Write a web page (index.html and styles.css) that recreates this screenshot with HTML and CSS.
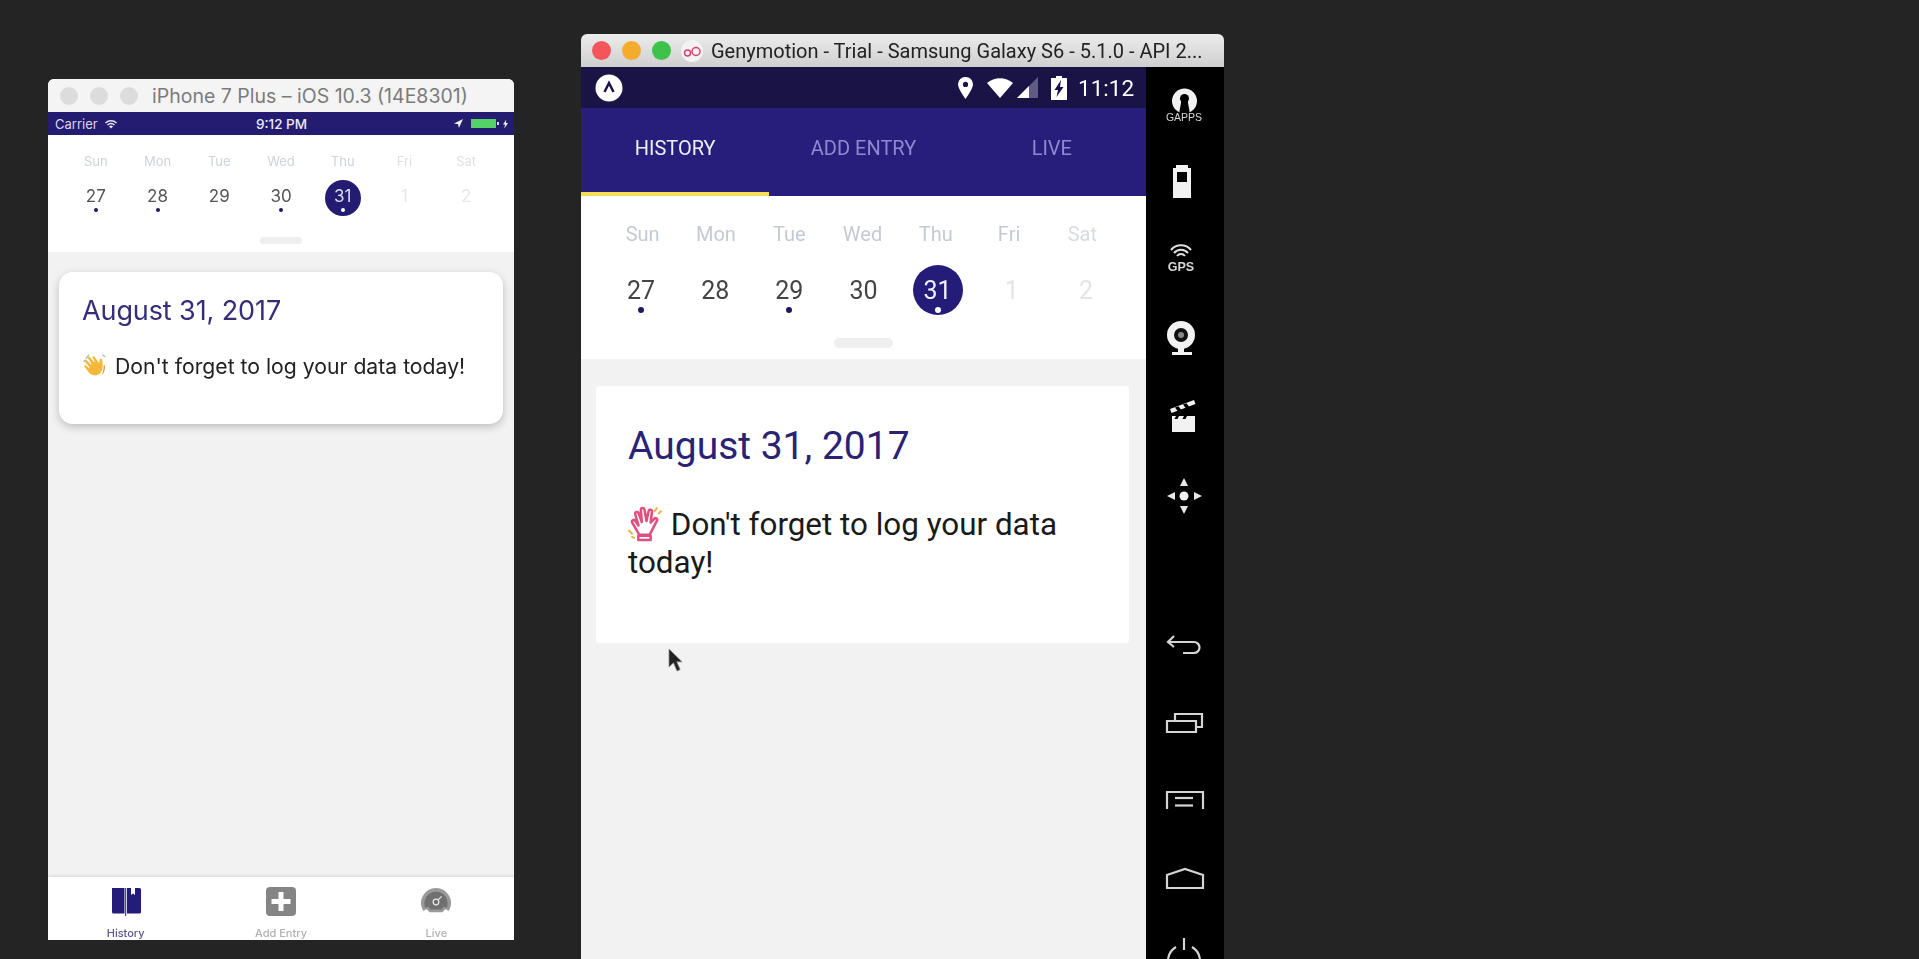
FILE: index.html
```html
<!DOCTYPE html>
<html lang="en">
<head>
<meta charset="utf-8">
<title>Simulators</title>
<link rel="stylesheet" href="styles.css">
</head>
<body>
<section class="ios">
  <header class="ios-title">
    <span class="ios-light"></span><span class="ios-light"></span><span class="ios-light"></span>
    <span class="ios-title-text">iPhone 7 Plus – iOS 10.3 (14E8301)</span>
  </header>
  <div class="ios-status">
    <span class="ios-carrier">Carrier
      <svg class="ios-wifi" viewBox="0 0 14 10"><path d="M1 3.500a8.500 8.500 0 0 1 12 0l-1 1a7 7 0 0 0-10 0zM3 5.500a5.700 5.700 0 0 1 8 0l-1 1a4.200 4.200 0 0 0-6 0zM5 7.500a2.800 2.800 0 0 1 4 0L7 9.600z"/></svg>
    </span>
    <span class="ios-time">9:12 PM</span>
    <span class="ios-right">
      <svg class="ios-arrow" viewBox="0 0 10 10"><path d="M10 0 0 5l4.500.8L5.500 10z"/></svg>
      <span class="ios-battery"></span><span class="ios-battery-tip"></span>
      <svg class="ios-bolt" viewBox="0 0 6 11"><path d="M4 0 0 6h2.400L1.600 11 6 4.400H3.400z"/></svg>
    </span>
  </div>
  <div class="ios-calendar">
    <div class="ios-week">
      <span class="ios-label">Sun</span><span class="ios-label">Mon</span><span class="ios-label">Tue</span><span class="ios-label">Wed</span><span class="ios-label">Thu</span><span class="ios-label is-faint">Fri</span><span class="ios-label is-faint">Sat</span>
    </div>
    <div class="ios-week ios-dates">
      <span class="ios-date has-dot">27</span><span class="ios-date has-dot">28</span><span class="ios-date">29</span><span class="ios-date has-dot">30</span><span class="ios-date is-selected has-dot">31</span><span class="ios-date is-disabled">1</span><span class="ios-date is-disabled">2</span>
    </div>
    <div class="ios-handle"></div>
  </div>
  <div class="ios-body">
    <article class="ios-card">
      <h2 class="ios-card-title">August 31, 2017</h2>
      <p class="ios-card-text">
        <svg class="ios-hand" viewBox="0 0 25 25"><path fill="#b9bcc4" d="M3 6 6 2l1 1-3 4zM1 9l1.500-2 1 .8-1.600 2zM19 2l3 2-.6 1-3-2z"/><path fill="#f4b93c" d="M8 21 2.500 14c-1-1.300.5-2.500 1.600-1.400l2.200 2.200.7-.7-4.300-5C1.700 7.700 3.300 6.500 4.300 7.500l4 4.200.6-.6-3.300-5c-.8-1.300 1-2.300 1.900-1.200l3.700 4.800.6-.5-2-3.600c-.7-1.300 1-2.200 1.800-1.100l4.300 6 .3-3c.3-1.700 2.500-1.600 2.600 0 .3 3.700.7 6.600-.3 9.500-1.500 4.600-7 6.300-10.500 3.200z"/><path fill="#e59a23" d="M21 12c.8 3.500-.2 7-2.500 9.500 1-3 1.700-6 1.500-9z"/></svg>
        Don't forget to log your data today!
      </p>
    </article>
  </div>
  <nav class="ios-tabs">
    <div class="ios-tab is-active">
      <svg class="ios-tab-icon" viewBox="0 0 30 30"><path fill="#231c78" d="M1 1h12.500v25.500H2.500A1.500 1.500 0 0 1 1 25zM16 1h4v7l2-1.600L24 8V1h4.500A1.500 1.500 0 0 1 30 2.500V25a1.500 1.500 0 0 1-1.500 1.500H16z"/><path fill="#231c78" d="M14.200 1h1v28h-1z"/></svg>
      <span class="ios-tab-label">History</span>
    </div>
    <div class="ios-tab">
      <svg class="ios-tab-icon" viewBox="0 0 30 30"><rect width="30" height="29" rx="4" fill="#858585"/><path fill="#fff" d="M12.500 5h5v7h7v5h-7v7h-5v-7h-7v-5h7z"/></svg>
      <span class="ios-tab-label">Add Entry</span>
    </div>
    <div class="ios-tab">
      <svg class="ios-tab-icon" viewBox="0 0 32 30"><path fill="#9a9a9a" d="M16 0a16 16 0 0 1 13.500 24.500L26 22.500 23 26H9l-3-3.500-3.500 2A16 16 0 0 1 16 0z"/><path fill="#707070" d="M16 4a12.500 12.500 0 0 1 11.500 17L24 20l-2 3H10l-2-3-3.500 1A12.500 12.500 0 0 1 16 4z"/><circle cx="16" cy="15" r="3" fill="none" stroke="#e8e8e8" stroke-width="1.300"/><path stroke="#e8e8e8" stroke-width="1.300" d="m18 13 4-4"/></svg>
      <span class="ios-tab-label">Live</span>
    </div>
  </nav>
</section>

<section class="android">
  <header class="geny-title">
    <span class="geny-light is-red"></span><span class="geny-light is-orange"></span><span class="geny-light is-green"></span>
    <svg class="geny-logo" viewBox="0 0 22 22"><circle cx="11" cy="11" r="11" fill="#f5f2f3"/><circle cx="6.500" cy="13" r="3" fill="none" stroke="#d8406c" stroke-width="1.500"/><circle cx="15" cy="11.500" r="4" fill="none" stroke="#d8406c" stroke-width="1.500"/></svg>
    <span class="geny-title-text">Genymotion - Trial - Samsung Galaxy S6 - 5.1.0 - API 2...</span>
  </header>
  <div class="geny-main">
    <div class="droid">
      <div class="droid-status">
        <svg class="droid-logo" viewBox="0 0 28 28"><circle cx="14" cy="14" r="13.500" fill="#fff"/><path fill="none" stroke="#1a1446" stroke-width="2.500" d="m9.500 18 4.500-9 4.500 9"/></svg>
        <svg class="droid-pin" viewBox="0 0 15 22"><path fill="#fff" fill-rule="evenodd" d="M7.500 0A7.300 7.300 0 0 1 15 7.300C15 12 7.500 22 7.500 22S0 12 0 7.300A7.300 7.300 0 0 1 7.500 0zm0 4.800a2.600 2.600 0 1 0 0 5.200 2.600 2.600 0 0 0 0-5.200z"/></svg>
        <svg class="droid-wifi" viewBox="0 0 26 20"><path fill="#fff" d="M13 20 0 5a20 20 0 0 1 26 0z"/></svg>
        <svg class="droid-signal" viewBox="0 0 21 21"><path fill="#5f5a86" d="M21 0v21H0z"/><path fill="#fff" d="M12 9v12H0z"/></svg>
        <svg class="droid-battery" viewBox="0 0 16 24"><path fill="#fff" d="M5 0h6v2h5v22H0V2h5z"/><path fill="#1a1446" d="M10 4 3.500 14H7l-1.500 7L12.500 11H9z"/></svg>
        <span class="droid-time">11:12</span>
      </div>
      <nav class="droid-tabs">
        <span class="droid-tab is-active">HISTORY</span>
        <span class="droid-tab">ADD ENTRY</span>
        <span class="droid-tab">LIVE</span>
      </nav>
      <div class="droid-calendar">
        <div class="droid-week droid-labels">
          <span class="droid-label">Sun</span><span class="droid-label">Mon</span><span class="droid-label">Tue</span><span class="droid-label">Wed</span><span class="droid-label">Thu</span><span class="droid-label">Fri</span><span class="droid-label is-faint">Sat</span>
        </div>
        <div class="droid-week droid-dates">
          <span class="droid-date has-dot">27</span><span class="droid-date">28</span><span class="droid-date has-dot">29</span><span class="droid-date">30</span><span class="droid-date is-selected has-dot">31</span><span class="droid-date is-disabled">1</span><span class="droid-date is-disabled">2</span>
        </div>
        <div class="droid-handle"></div>
      </div>
      <div class="droid-body">
        <article class="droid-card">
          <h2 class="droid-card-title">August 31, 2017</h2>
          <p class="droid-card-text">
            <svg class="droid-hand" viewBox="0 0 34 36"><g fill="none" stroke="#e0507f" stroke-width="2.500" stroke-linejoin="round" stroke-linecap="round"><path d="M11 29 4 17c-1-2 2-3.500 3.200-1.500l3 4.500L7 9c-.6-2.300 2.600-3 3.400-1l3 8.500L12.500 5c-.2-2.500 3-2.700 3.500-.5l2 11 2-9.500c.5-2.300 3.500-1.700 3.300.5L22 17l3.500-3.500c1.700-1.600 3.800.3 2.500 2L21 29z"/><path d="M10 30h12v4H10z"/></g><path fill="none" stroke="#f0b44c" stroke-width="2" stroke-linecap="round" d="M1 25l3 3M4 31l2 1M28 3l-2 3M32 6l-2 2"/></svg>
            Don't forget to log your data today!
          </p>
        </article>
        <svg class="cursor" viewBox="0 0 16 26"><path fill="#222" stroke="#888" stroke-width=".8" d="M1 1v18l4.500-4.300L9 23l3.200-1.400-3.500-7.800H14z"/></svg>
      </div>
    </div>
    <aside class="side">
      <div class="side-group">
        <svg class="side-icon" viewBox="0 0 44 44"><circle cx="21.500" cy="20" r="12.500" fill="#f2f2f2"/><circle cx="21.500" cy="17.500" r="4.500" fill="#000"/><path fill="#000" d="M18.500 19h6l2.500 14H16z"/><text class="side-text" x="21" y="40">GAPPS</text></svg>
        <svg class="side-icon" viewBox="0 0 44 44"><path fill="#f2f2f2" fill-rule="evenodd" d="M13 6h12v3h3v30H10V9h3zM14 13v10h10V13z"/></svg>
        <svg class="side-icon" viewBox="0 0 44 44"><g fill="none" stroke="#e0e0e0" stroke-width="2"><path d="M8 13a13 13 0 0 1 20 0M11 16a9 9 0 0 1 14 0M14 19a5 5 0 0 1 8 0"/></g><text class="side-text is-bold" x="18" y="34">GPS</text></svg>
        <svg class="side-icon" viewBox="0 0 44 44"><circle cx="18" cy="20" r="14" fill="#f2f2f2"/><circle cx="18" cy="20" r="7" fill="#111"/><circle cx="18" cy="20" r="3" fill="#888"/><path fill="#f2f2f2" d="M9 37h20v3H9zM15 32h6v5h-6z"/></svg>
        <svg class="side-icon" viewBox="0 0 44 44"><path fill="#f2f2f2" d="M9 23h23v16H9zM7 16 31 7l1.500 4L8.500 20z"/><path fill="#000" d="m12 14.500 3.500-1.300 3 4-3.500 1.300zM20 11.500l3.500-1.300 3 4-3.500 1.300zM13 23h3l-1.500 3h-3zM21 23h3l-1.500 3h-3z"/></svg>
        <svg class="side-icon" viewBox="0 0 44 44"><circle cx="21" cy="25" r="4.500" fill="#f2f2f2"/><path fill="#e8e8e8" d="m21 7 4 8h-8zM21 43l-4-8h8zM4 25l8-4v8zM39 25l-8 4v-8z"/></svg>
      </div>
      <div class="side-group is-nav">
        <svg class="side-icon" viewBox="0 0 44 44"><path class="side-line" d="M11 14 5 20l6 5M5 20h26a5.500 5.500 0 0 1 0 11H20"/></svg>
        <svg class="side-icon" viewBox="0 0 44 44"><path class="side-line" d="M4 21h29v11H4zM12 21v-7h27v13h-6"/></svg>
        <svg class="side-icon" viewBox="0 0 44 44"><path class="side-line" d="M4 31V14h36v17"/><path class="side-line" d="M12 20h18"/><path class="side-line" d="M12 27.500h18"/></svg>
        <svg class="side-icon" viewBox="0 0 44 44"><path class="side-line" d="M4 32V19l18-6 18 6v13z"/></svg>
        <svg class="side-icon" viewBox="0 0 44 44"><path class="side-line" d="M13 13A16 16 0 1 0 29 13M21 4v12"/></svg>
      </div>
    </aside>
  </div>
</section>
</body>
</html>
```

FILE: styles.css
```css
* { box-sizing: border-box; }
html, body { margin: 0; height: 100%; }
body {
  background: #242424;
  overflow: hidden;
  position: relative;
  font-family: "Roboto", "Liberation Sans", sans-serif;
}
h2, p { margin: 0; font-weight: 400; }

/* iOS simulator window */
.ios {
  position: absolute;
  left: 48px;
  top: 79px;
  width: 466px;
  height: 861px;
  display: flex;
  flex-direction: column;
  background: #f2f2f2;
  border-radius: 6px 6px 0 0;
  overflow: hidden;
  filter: blur(.5px);
  font-family: "Inter", "Liberation Sans", sans-serif;
}
.ios-title {
  height: 33px;
  flex: none;
  display: flex;
  align-items: center;
  gap: 12px;
  padding-left: 12px;
  background: #f4f4f4;
}
.ios-light { width: 18px; height: 18px; border-radius: 50%; background: #dcdcdc; }
.ios-title-text { margin-left: 2px; font-size: 19.500px; color: #7b7b7b; white-space: nowrap; }
.ios-status {
  height: 23px;
  flex: none;
  display: grid;
  grid-template-columns: 1fr auto 1fr;
  align-items: center;
  padding: 0 6px 0 7px;
  background: #241c70;
  color: #d8d6ec;
  font-size: 13px;
}
.ios-carrier { display: flex; align-items: center; gap: 6px; }
.ios-wifi { width: 14px; height: 10px; fill: #e4e4f2; }
.ios-time { font-weight: 500; color: #ecebf6; font-size: 13.500px; }
.ios-right { display: flex; justify-content: flex-end; align-items: center; }
.ios-arrow { width: 9px; height: 9px; fill: #eee; margin-right: 8px; }
.ios-battery { width: 25px; height: 9px; background: #54d267; }
.ios-battery-tip { width: 2px; height: 3px; background: #ddd; margin: 0 4px 0 1px; }
.ios-bolt { width: 5px; height: 10px; fill: #eee; }
.ios-calendar { flex: none; padding: 17px 17px 8px; background: #fff; }
.ios-week { display: grid; grid-template-columns: repeat(7, 1fr); text-align: center; }
.ios-label { height: 18px; line-height: 18px; font-size: 13px; color: #cfd2da; }
.ios-label.is-faint { color: #dfe1e6; }
.ios-dates { margin-top: 10px; }
.ios-date {
  position: relative;
  height: 36px;
  line-height: 32px;
  font-size: 17px;
  color: #555;
}
.ios-date.is-disabled { color: #e8e8e8; }
.ios-date.is-selected {
  width: 36px;
  justify-self: center;
  border-radius: 50%;
  background: #241c72;
  color: #ddddf0;
}
.ios-date.has-dot::after {
  content: "";
  position: absolute;
  left: 50%;
  top: 28px;
  width: 4px;
  height: 4px;
  margin-left: -2px;
  border-radius: 50%;
  background: #1e1860;
}
.ios-date.is-selected.has-dot::after { background: #fff; }
.ios-handle { width: 42px; height: 7px; margin: 21px auto 0; border-radius: 4px; background: #eeeeee; }
.ios-body { flex: 1; padding: 20px 11px 0; }
.ios-card {
  height: 152px;
  padding: 22px 23px 0;
  background: #fff;
  border-radius: 14px;
  box-shadow: 0 3px 8px rgba(0,0,0,.22);
}
.ios-card-title { font-size: 27px; line-height: 34px; color: #352d78; letter-spacing: -.1px; }
.ios-card-text {
  display: flex;
  align-items: center;
  gap: 6px;
  margin-top: 24px;
  font-size: 21.200px;
  line-height: 26px;
  color: #222;
  white-space: nowrap;
}
.ios-hand { width: 27px; height: 27px; flex: none; }
.ios-tabs {
  flex: none;
  height: 63px;
  display: grid;
  grid-template-columns: repeat(3, 1fr);
  background: #fff;
  box-shadow: 0 -1px 3px rgba(0,0,0,.12);
}
.ios-tab {
  display: flex;
  flex-direction: column;
  align-items: center;
  padding-top: 10px;
  font-size: 11px;
  line-height: 12px;
  color: #b0b0b0;
  font-weight: 500;
}
.ios-tab.is-active { color: #5c5692; }
.ios-tab-icon { width: 30px; height: 30px; }
.ios-tab-label { margin-top: 10px; }

/* Genymotion window */
.android {
  position: absolute;
  left: 581px;
  top: 34px;
  width: 643px;
  height: 925px;
  display: flex;
  flex-direction: column;
  border-radius: 6px 6px 0 0;
  overflow: hidden;
  filter: blur(.5px);
}
.geny-title {
  height: 33px;
  flex: none;
  display: flex;
  align-items: center;
  padding-left: 11px;
  background: linear-gradient(#ececec, #cfcfcf);
}
.geny-light { width: 19px; height: 19px; border-radius: 50%; margin-right: 11px; }
.is-red { background: #f4555a; }
.is-orange { background: #f5ab2c; }
.is-green { background: #3dc24a; }
.geny-logo { width: 22px; height: 22px; flex: none; margin: 0 8px 0 -1px; }
.geny-title-text { font-size: 20px; color: #222; white-space: nowrap; }
.geny-main { flex: 1; min-height: 0; display: flex; }
.droid { width: 565px; flex: none; display: flex; flex-direction: column; background: #f2f2f2; }
.droid-status {
  height: 41px;
  flex: none;
  display: flex;
  align-items: center;
  padding: 0 13px 0 14px;
  background: #1a1446;
}
.droid-logo { width: 28px; height: 28px; margin-right: auto; }
.droid-pin { width: 15px; height: 22px; }
.droid-wifi { width: 26px; height: 20px; margin-left: 14px; }
.droid-signal { width: 21px; height: 21px; margin-left: 4px; }
.droid-battery { width: 16px; height: 24px; margin-left: 13px; }
.droid-time { width: 55px; margin-left: 11px; font-size: 22.500px; color: #fff; white-space: nowrap; }
.droid-tabs { flex: none; height: 88px; display: grid; grid-template-columns: repeat(3, 1fr); background: #261e7a; }
.droid-tab {
  display: flex;
  align-items: center;
  justify-content: center;
  padding-bottom: 5px;
  border-bottom: 4px solid transparent;
  font-size: 20px;
  font-weight: 400;
  color: #8e89d2;
}
.droid-tab.is-active { color: #eeeefa; border-bottom-color: #f5de55; }
.droid-calendar { flex: none; padding: 24px 23px 11px; background: #fff; }
.droid-week { display: grid; grid-template-columns: repeat(7, 1fr); text-align: center; }
.droid-labels { padding: 0 4px 0 2px; }
.droid-label { height: 28px; line-height: 28px; font-size: 20px; color: #c5cad2; }
.droid-label.is-faint { color: #d8dbe0; }
.droid-dates { margin-top: 17px; }
.droid-date {
  position: relative;
  height: 50px;
  line-height: 51px;
  font-size: 25px;
  color: #444;
}
.droid-date.is-disabled { color: #e4e4e4; }
.droid-date.is-selected {
  width: 50px;
  justify-self: center;
  border-radius: 50%;
  background: #241c78;
  color: #f0f0fa;
}
.droid-date.has-dot::after {
  content: "";
  position: absolute;
  left: 50%;
  top: 42px;
  width: 6px;
  height: 6px;
  margin-left: -3px;
  border-radius: 50%;
  background: #1e1860;
}
.droid-date.is-selected.has-dot::after { background: #fff; }
.droid-handle { width: 59px; height: 10px; margin: 23px auto 0; border-radius: 5px; background: #efefef; }
.droid-body { position: relative; flex: 1; padding: 27px 17px 0 15px; }
.droid-card { height: 257px; padding: 35px 32px 0; background: #fff; border-radius: 3px; }
.droid-card-title { font-size: 39px; line-height: 50px; color: #2a2275; }
.droid-card-text { margin-top: 34px; font-size: 31.400px; line-height: 37.500px; color: #1a1a1a; }
.droid-hand { width: 35px; height: 37px; vertical-align: -7px; }
.cursor { position: absolute; left: 87px; top: 289px; width: 16px; height: 26px; }
.side { flex: 1; display: flex; flex-direction: column; align-items: center; padding-top: 14px; background: #000; }
.side-group { display: flex; flex-direction: column; gap: 34px; }
.side-group.is-nav { margin-top: 107px; }
.side-icon { width: 44px; height: 44px; display: block; overflow: visible; }
.side-text { font-family: "Liberation Sans", sans-serif; font-size: 10.500px; fill: #d8d8d8; text-anchor: middle; }
.side-text.is-bold { font-size: 12.500px; font-weight: 700; }
.side-line { fill: none; stroke: #d4d4d4; stroke-width: 2.200; }
```
